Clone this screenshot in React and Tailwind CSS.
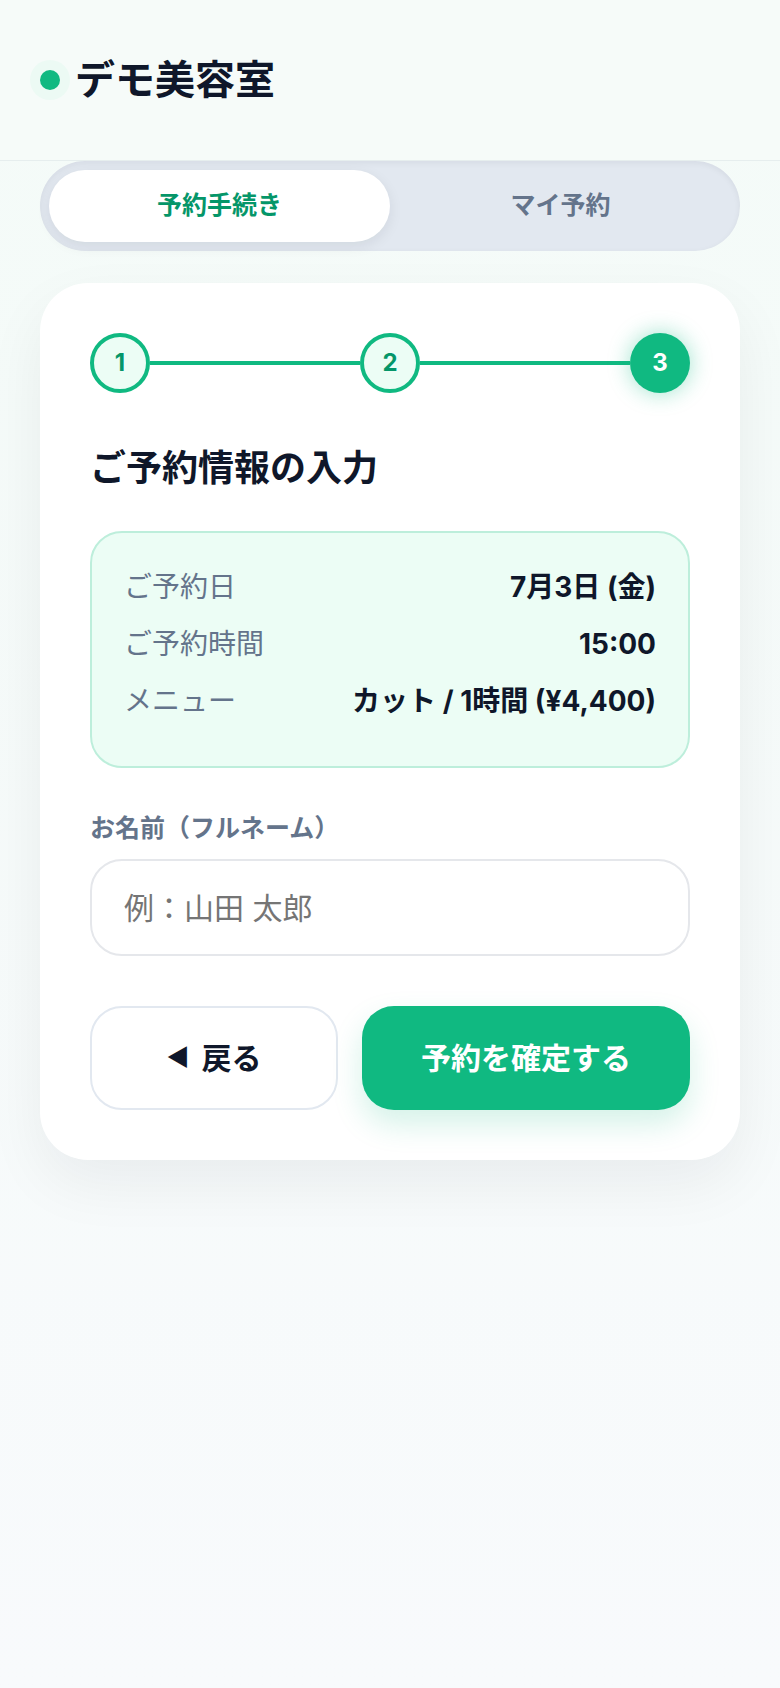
import { useState } from 'react';

const summary = [
  { label: 'ご予約日', value: '7月3日 (金)' },
  { label: 'ご予約時間', value: '15:00' },
  { label: 'メニュー', value: 'カット / 1時間 (¥4,400)' },
];

const StepCircle = ({ n, active }) => (
  <div
    className={
      active
        ? 'w-[60px] h-[60px] rounded-full bg-[#10b981] text-white flex items-center justify-center text-[24px] font-bold shadow-[0_0_22px_rgba(16,185,129,0.4)]'
        : 'w-[60px] h-[60px] rounded-full bg-[#ecfdf5] border-4 border-[#10b981] text-[#059669] flex items-center justify-center text-[24px] font-bold'
    }
  >
    {n}
  </div>
);

const App = () => {
  const [tab, setTab] = useState('book');
  const [name, setName] = useState('');

  return (
    <div
      className="min-h-screen bg-gradient-to-b from-[#f4fbf8] to-[#f8fafc] text-[#0f172a]"
      style={{ fontFamily: 'Inter, "Noto Sans CJK JP", "Noto Sans", sans-serif' }}
    >
      <header className="h-[161px] flex items-center px-[40px] border-b border-[#e6eeee] bg-[#f6fbf9]">
        <div className="flex items-center gap-[15px]">
          <span className="w-5 h-5 rounded-full bg-[#10b981] shadow-[0_0_0_10px_#ecfaf4]" />
          <h1 className="text-[40px] font-bold leading-none text-[#0f172a]">デモ美容室</h1>
        </div>
      </header>

      <main className="px-[40px] pb-10">
        <div className="flex p-[9px] rounded-full bg-[#e2e8f0] shadow-[inset_0_2px_6px_rgba(15,23,42,0.06)]">
          <button
            onClick={() => setTab('book')}
            className={
              tab === 'book'
                ? 'flex-1 h-[72px] rounded-full bg-white text-[#059669] text-[25px] font-bold shadow-[0_4px_14px_rgba(15,23,42,0.08)]'
                : 'flex-1 h-[72px] rounded-full text-[#64748b] text-[25px] font-bold'
            }
          >
            予約手続き
          </button>
          <button
            onClick={() => setTab('mine')}
            className={
              tab === 'mine'
                ? 'flex-1 h-[72px] rounded-full bg-white text-[#059669] text-[25px] font-bold shadow-[0_4px_14px_rgba(15,23,42,0.08)]'
                : 'flex-1 h-[72px] rounded-full text-[#64748b] text-[25px] font-bold'
            }
          >
            マイ予約
          </button>
        </div>

        <section className="mt-[32px] bg-white rounded-[48px] p-[50px] shadow-[0_24px_60px_rgba(15,23,42,0.06)]">
          <div className="flex items-center">
            <StepCircle n="1" />
            <div className="flex-1 h-1 bg-[#10b981]" />
            <StepCircle n="2" />
            <div className="flex-1 h-1 bg-[#10b981]" />
            <StepCircle n="3" active />
          </div>

          <h2 className="mt-[52px] text-[36px] font-bold leading-[47px] text-[#0f172a]">ご予約情報の入力</h2>

          <div className="mt-[39px] rounded-[32px] border-2 border-[#bdeedb] bg-[#ecfdf5] px-[32px] pt-[32px] pb-[30px]">
            {summary.map((row) => (
              <div key={row.label} className="flex justify-between items-center leading-[44px] mb-[13px]">
                <span className="text-[28px] text-[#64748b]">{row.label}</span>
                <span className="text-[28px] font-bold text-[#0f172a]">{row.value}</span>
              </div>
            ))}
          </div>

          <label className="block mt-[44px] text-[25px] font-bold leading-[32px] text-[#64748b]">
            お名前（フルネーム）
          </label>
          <input
            type="text"
            value={name}
            onChange={(e) => setName(e.target.value)}
            placeholder="例：山田 太郎"
            className="mt-[15px] w-full h-[97px] rounded-[32px] border-2 border-[#e5e7eb] bg-white px-[32px] text-[30px] text-[#0f172a] placeholder:text-[#757575] outline-none"
          />

          <div className="mt-[50px] flex gap-[24px]">
            <button className="w-[248px] h-[104px] rounded-[32px] border-2 border-[#e2e8f0] bg-white text-[30px] font-bold text-[#0f172a] flex items-center justify-center gap-[12px]">
              <span className="text-[24px]">◀</span>
              <span>戻る</span>
            </button>
            <button className="flex-1 h-[104px] rounded-[32px] bg-[#10b981] text-white text-[30px] font-bold shadow-[0_14px_30px_rgba(16,185,129,0.18)]">
              予約を確定する
            </button>
          </div>
        </section>
      </main>
    </div>
  );
};

export default App;
